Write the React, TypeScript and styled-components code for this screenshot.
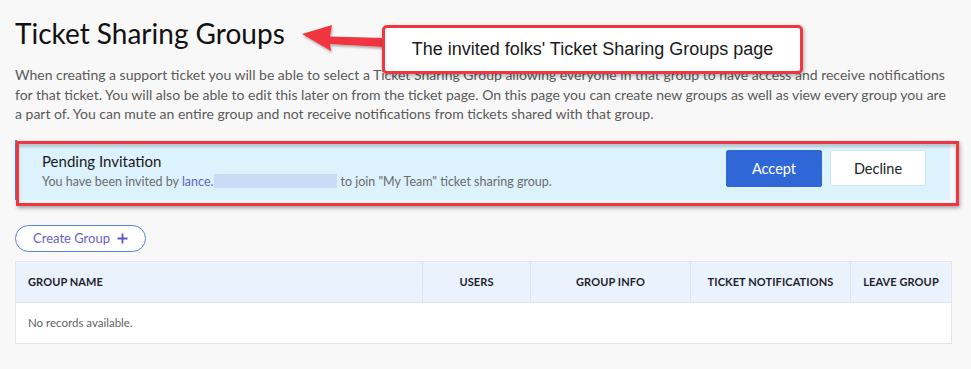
import React from 'react';
import styled, { createGlobalStyle } from 'styled-components';

const GlobalStyle = createGlobalStyle`
  html, body {
    margin: 0;
    padding: 0;
    background: #f8f8f8;
  }
  body {
    font-family: Lato, "Open Sans", sans-serif;
    color: #1b1b1b;
  }
`;

const Page = styled.div`
  position: relative;
  width: 971px;
  height: 369px;
  padding: 0 21px 0 15px;
  box-sizing: border-box;
  overflow: hidden;
`;

const Title = styled.h1`
  margin: 0;
  padding-top: 16px;
  font-size: 28px;
  font-weight: 400;
  line-height: 34px;
  color: #111;
`;

const Intro = styled.p`
  margin: 15px 0 0;
  font-size: 14px;
  line-height: 19.5px;
  color: #5a5a5a;
`;

const Alert = styled.div`
  position: relative;
  margin-top: 16px;
  height: 60px;
  display: flex;
  align-items: center;
  justify-content: space-between;
  padding: 0 24px 0 25px;
  background: #dcf2fd;
  border-left: 2px solid #3d94da;
  box-sizing: border-box;
`;

const AlertText = styled.div`
  display: flex;
  flex-direction: column;
  gap: 4px;
  margin-top: 1px;
`;

const AlertTitle = styled.div`
  font-size: 15px;
  color: #1a1a1a;
`;

const AlertBody = styled.div`
  font-size: 12.5px;
  color: #6b6b6b;
  display: flex;
  align-items: center;
`;

const UserLink = styled.span`
  color: #6760c8;
`;

const Redacted = styled.span`
  display: inline-block;
  width: 123px;
  height: 14px;
  margin: 0 3px 0 1px;
  background: #c9dcf6;
`;

const Actions = styled.div`
  display: flex;
  gap: 8px;
  margin-top: -2px;
`;

const ActionButton = styled.button<{ $primary?: boolean }>`
  width: 96px;
  height: ${(p) => (p.$primary ? '37px' : '36px')};
  font-family: Lato, sans-serif;
  font-size: 14.5px;
  border-radius: 2px;
  cursor: pointer;
  color: ${(p) => (p.$primary ? '#fff' : '#222')};
  background: ${(p) => (p.$primary ? '#3067d6' : '#fff')};
  border: 1px solid ${(p) => (p.$primary ? '#3067d6' : '#cbe7f8')};
`;

const RedFrame = styled.div`
  position: absolute;
  left: 16px;
  top: 141px;
  width: 943px;
  height: 65px;
  border: 3px solid #f0363f;
  box-sizing: border-box;
  box-shadow: 1px 2px 4px rgba(0, 0, 0, 0.35), inset 0 3px 3px rgba(0, 0, 0, 0.18);
  pointer-events: none;
`;

const Callout = styled.div`
  position: absolute;
  left: 382px;
  top: 25px;
  width: 421px;
  height: 49px;
  box-sizing: border-box;
  border: 3px solid #f0363f;
  border-radius: 5px;
  background: #fff;
  box-shadow: 1px 2px 4px rgba(0, 0, 0, 0.3);
  display: flex;
  align-items: center;
  justify-content: center;
  font-family: "Liberation Sans", Arial, sans-serif;
  font-size: 18px;
  color: #1a1a1a;
`;

const Arrow = styled.svg`
  position: absolute;
  left: 298px;
  top: 21px;
  overflow: visible;
`;

const CreateButton = styled.button`
  margin-top: 25px;
  width: 131px;
  height: 27px;
  border-radius: 14px;
  border: 1px solid #5a7fe0;
  background: #fff;
  color: #6a5ecb;
  font-family: Lato, sans-serif;
  font-size: 13px;
  display: flex;
  align-items: center;
  justify-content: center;
  gap: 7px;
  cursor: pointer;
`;

const Table = styled.div`
  margin-top: 9px;
  width: 935px;
  border: 1px solid #e2e6ec;
  background: #fff;
`;

const HeaderRow = styled.div`
  display: grid;
  grid-template-columns: 406px 108px 160px 160px 1fr;
  height: 40px;
  background: #eaf2fd;
  border-bottom: 1px solid #dde4ee;
`;

const HeadCell = styled.div<{ $left?: boolean }>`
  display: flex;
  align-items: center;
  justify-content: ${(p) => (p.$left ? 'flex-start' : 'center')};
  padding-left: ${(p) => (p.$left ? '12px' : '0')};
  border-left: ${(p) => (p.$left ? 'none' : '1px solid #dde4ee')};
  font-size: 11px;
  font-weight: 700;
  color: #1e1e2e;
  letter-spacing: 0.1px;
`;

const EmptyRow = styled.div`
  height: 40px;
  display: flex;
  align-items: center;
  padding-left: 12px;
  font-size: 11.5px;
  color: #5f5f5f;
`;

const columns = ['USERS', 'GROUP INFO', 'TICKET NOTIFICATIONS', 'LEAVE GROUP'];

export default function App() {
  return (
    <Page>
      <GlobalStyle />
      <Title>Ticket Sharing Groups</Title>
      <Intro>
        When creating a support ticket you will be able to select a Ticket Sharing Group allowing everyone in that group to have access and receive notifications
        <br />
        for that ticket. You will also be able to edit this later on from the ticket page. On this page you can create new groups as well as view every group you are
        <br />
        a part of. You can mute an entire group and not receive notifications from tickets shared with that group.
      </Intro>
      <Alert>
        <AlertText>
          <AlertTitle>Pending Invitation</AlertTitle>
          <AlertBody>
            You have been invited by&nbsp;<UserLink>lance.</UserLink>
            <Redacted />
            to join "My Team" ticket sharing group.
          </AlertBody>
        </AlertText>
        <Actions>
          <ActionButton $primary>Accept</ActionButton>
          <ActionButton>Decline</ActionButton>
        </Actions>
      </Alert>
      <CreateButton>
        Create Group
        <svg width="11" height="11" viewBox="0 0 11 11">
          <path d="M5.5 0.5v10M0.5 5.5h10" stroke="#5a55c8" strokeWidth="1.8" />
        </svg>
      </CreateButton>
      <Table>
        <HeaderRow>
          <HeadCell $left>GROUP NAME</HeadCell>
          {columns.map((c) => (
            <HeadCell key={c}>{c}</HeadCell>
          ))}
        </HeaderRow>
        <EmptyRow>No records available.</EmptyRow>
      </Table>

      <RedFrame />
      <Arrow width="90" height="34" viewBox="0 0 90 34">
        <defs>
          <filter id="sh" x="-20%" y="-20%" width="140%" height="160%">
            <feDropShadow dx="1" dy="2" stdDeviation="1.2" floodColor="#000" floodOpacity="0.3" />
          </filter>
        </defs>
        <polygon
          points="4,13 34,4 32,15.5 86,17 86,26 32,23 33,30"
          fill="#f0363f"
          filter="url(#sh)"
        />
      </Arrow>
      <Callout>The invited folks' Ticket Sharing Groups page</Callout>
    </Page>
  );
}
